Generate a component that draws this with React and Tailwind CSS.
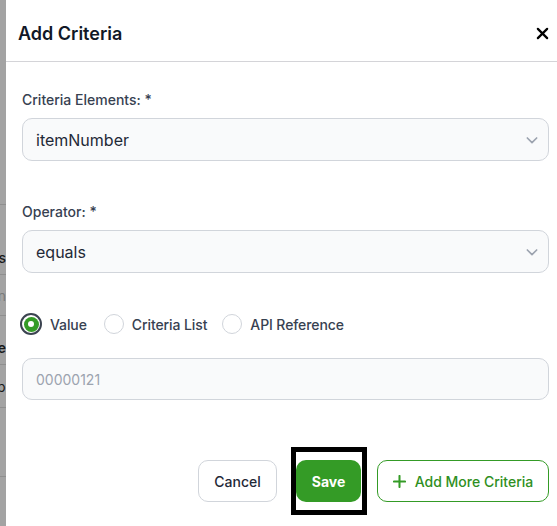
import React from "react";

function Chevron() {
  return (
    <svg width="16" height="16" viewBox="0 0 24 24" fill="none" stroke="#9ca3af" strokeWidth="2.5" strokeLinecap="round" strokeLinejoin="round">
      <path d="M5 9l7 7 7-7" />
    </svg>
  );
}

function Select({ value }) {
  return (
    <div className="flex h-[43px] items-center justify-between rounded-[10px] border border-[#d1d5db] bg-[#f9fafb] pl-[13px] pr-[8px]">
      <span className="text-[16px] text-[#1f2937]">{value}</span>
      <Chevron />
    </div>
  );
}

function Radio({ checked, label }) {
  return (
    <div className="flex items-center gap-2">
      {checked ? (
        <div className="flex h-[22px] w-[22px] items-center justify-center rounded-full border-[2px] border-[#3b4350]">
          <div className="flex h-[15px] w-[15px] items-center justify-center rounded-full bg-[#349b26]">
            <div className="h-[6px] w-[6px] rounded-full bg-white" />
          </div>
        </div>
      ) : (
        <div className="h-[20px] w-[20px] rounded-full border border-[#d1d5db] bg-white" />
      )}
      <span className="text-[14px] font-medium tracking-[-0.1px] text-[#374151]">{label}</span>
    </div>
  );
}

export default function App() {
  return (
    <div className="flex h-[526px] w-[557px] overflow-hidden bg-white" style={{ fontFamily: "Inter, 'Noto Sans', sans-serif" }}>
      <div className="flex w-[6px] shrink-0 flex-col overflow-hidden bg-[#a3a3a3] text-[14px]">
        <div className="h-[205px] shrink-0 border-b border-[#8f8f8f]" />
        <div className="flex h-[70px] shrink-0 items-end justify-end border-b border-[#8f8f8f] pb-[6px] font-medium text-[#1a1a1a] whitespace-nowrap">Items</div>
        <div className="flex h-[41px] shrink-0 items-center justify-end border-b border-[#8f8f8f] text-[#7a7a7a] whitespace-nowrap">En</div>
        <div className="flex h-[49px] shrink-0 items-end justify-end border-b border-[#8f8f8f] pb-[6px] font-semibold text-[#1a1a1a] whitespace-nowrap">Type</div>
        <div className="flex h-[43px] shrink-0 items-center justify-start border-b border-[#8f8f8f] whitespace-nowrap">
          <span className="ml-[-3px] text-[#1a1a1a]">p</span>
          <span className="text-[#8a5a1a]">|</span>
        </div>
        <div className="h-[69px] shrink-0 border-b border-[#8f8f8f]" />
        <div className="flex-1" />
      </div>

      <div className="flex flex-1 flex-col">
        <div className="flex h-[62px] shrink-0 items-center justify-between border-b border-[#d4d4d8] pl-3 pr-2 pt-[6px]">
          <h2 className="text-[18px] font-semibold text-[#111827]">Add Criteria</h2>
          <svg width="13" height="13" viewBox="0 0 14 14" fill="none" stroke="#000" strokeWidth="2.4" strokeLinecap="round">
            <path d="M2 2l10 10M12 2L2 12" />
          </svg>
        </div>

        <div className="flex flex-col pl-4 pr-2 pt-[28px]">
          <label className="h-5 text-[14px] font-medium leading-5 text-[#374151]">Criteria Elements: *</label>
          <div className="mt-2">
            <Select value="itemNumber" />
          </div>

          <label className="mt-[41px] h-5 text-[14px] font-medium leading-5 text-[#374151]">Operator: *</label>
          <div className="mt-2">
            <Select value="equals" />
          </div>

          <div className="mt-[40px] flex h-[22px] items-center">
            <div className="ml-[-2px]">
              <Radio checked label="Value" />
            </div>
            <div className="ml-[17px]">
              <Radio label="Criteria List" />
            </div>
            <div className="ml-[15px]">
              <Radio label="API Reference" />
            </div>
          </div>

          <div className="mt-[23px] flex h-[42px] items-center rounded-[10px] border border-[#d1d5db] bg-[#f9fafb] px-[13px]">
            <span className="text-[14px] text-[#9ca3af]">00000121</span>
          </div>

          <div className="mt-[60px] flex items-center justify-end">
            <button className="flex h-[42px] w-[79px] items-center justify-center rounded-[10px] border border-[#d1d5db] bg-white text-[14px] font-medium text-[#1f2937]">
              Cancel
            </button>
            <div className="relative ml-[19px]">
              <button className="flex h-[42px] w-[65px] items-center justify-center rounded-[10px] bg-[#349b26] text-[14px] font-bold text-white">
                Save
              </button>
              <div className="pointer-events-none absolute left-[-5px] right-[-6px] top-[-13px] bottom-[-13px] border-[5px] border-black" />
            </div>
            <button className="ml-[16px] flex h-[42px] w-[172px] items-center justify-center gap-[9px] rounded-[10px] border border-[#349b26] bg-white text-[14px] font-medium text-[#2f8f22]">
              <svg width="13" height="13" viewBox="0 0 14 14" fill="none" stroke="#349b26" strokeWidth="2.2" strokeLinecap="round">
                <path d="M7 1v12M1 7h12" />
              </svg>
              Add More Criteria
            </button>
          </div>
        </div>
      </div>
    </div>
  );
}
